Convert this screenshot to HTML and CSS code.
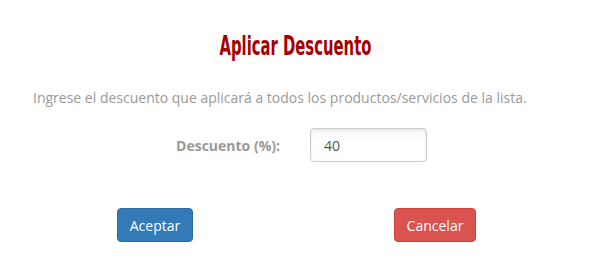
FILE: index.html
```html
<!DOCTYPE html>
<html lang="es">
<head>
<meta charset="utf-8">
<title>Aplicar Descuento</title>
<link rel="stylesheet" href="styles.css">
</head>
<body>
<div class="dialog">
  <h2 class="title"><span class="title-text">Aplicar Descuento</span></h2>
  <p class="desc">Ingrese el descuento que aplicará a todos los productos/servicios de la lista.</p>
  <div class="form-row">
    <label class="label" for="descuento">Descuento (%):</label>
    <div class="field"><input id="descuento" class="input" type="text" value="40"></div>
  </div>
  <div class="actions">
    <div class="cell"><button class="btn btn-primary">Aceptar</button></div>
    <div class="cell"><button class="btn btn-danger">Cancelar</button></div>
  </div>
</div>
</body>
</html>
```
FILE: styles.css
```css
html, body {
  margin: 0;
  padding: 0;
  background: #ffffff;
}
body {
  font-family: "Open Sans", "DejaVu Sans", sans-serif;
  font-size: 14px;
  color: #999999;
}
.dialog {
  width: 560px;
  padding: 0 15px;
}
.title {
  margin: 0;
  padding-top: 29px;
  height: 33px;
  line-height: 33px;
  text-align: center;
  font-family: "DejaVu Sans Condensed", "DejaVu Sans", sans-serif;
  font-stretch: condensed;
  font-weight: bold;
  font-size: 27px;
  color: #a50000;
}
.title-text {
  display: inline-block;
  transform: scaleX(0.61);
  transform-origin: center;
}
.desc {
  margin: 27px 0 0 18px;
  line-height: 18px;
  font-size: 14px;
  color: #9a9a9a;
}
.form-row {
  display: grid;
  grid-template-columns: 1fr 1fr;
  margin-top: 21px;
  align-items: center;
}
.label {
  text-align: right;
  padding-right: 15px;
  font-weight: bold;
  font-size: 14px;
  color: #999999;
}
.field {
  padding-left: 15px;
}
.input {
  box-sizing: border-box;
  width: 117px;
  height: 34px;
  border: 1px solid #cccccc;
  border-radius: 4px;
  box-shadow: inset 0 1px 3px rgba(0,0,0,0.09);
  background: linear-gradient(#f7f7f7, #ffffff 40%);
  padding: 0 13px;
  font-family: "Open Sans", "DejaVu Sans", sans-serif;
  font-size: 14px;
  color: #555555;
  outline: none;
}
.actions {
  display: grid;
  grid-template-columns: 1fr 1fr;
  margin-top: 46px;
  justify-items: center;
}
.btn {
  box-sizing: border-box;
  height: 34px;
  padding: 0 12px;
  border-radius: 4px;
  border: 1px solid transparent;
  font-family: "Open Sans", "DejaVu Sans", sans-serif;
  font-size: 14px;
  color: #ffffff;
  cursor: pointer;
}
.btn-primary {
  background: #337ab7;
  border-color: #2e6da4;
}
.btn-danger {
  background: #d9534f;
  border-color: #d43f3a;
}
```
